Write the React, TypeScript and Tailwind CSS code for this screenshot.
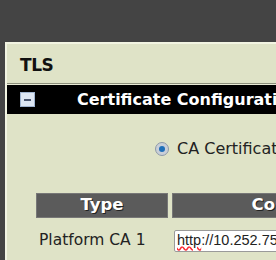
import React from 'react';

const App: React.FC = () => {
  return (
    <div className="w-[276px] h-[260px] overflow-hidden bg-[#444444] pl-[5px] pt-[42px]" style={{ fontFamily: '"DejaVu Sans", Verdana, sans-serif' }}>
      <div className="w-[460px] h-[240px] bg-[#dfe3c7] border-l-2 border-t-2 border-[#f2f4e2]">
        {/* Section title */}
        <div className="h-[39px] pl-[13px] pt-[9px] text-[17px] leading-[24px] font-bold text-[#111] tracking-tight">TLS</div>
        <div className="border-t border-[#8c8f7c] h-[2px] bg-[#e9ebd6]" />

        {/* Collapsible bar */}
        <div className="h-[29px] bg-black flex items-center">
          <div className="ml-[13px] w-[15px] h-[15px] bg-[#dde6f3] border border-[#9fb3cf] flex items-center justify-center">
            <div className="w-[7px] h-[2px] bg-[#4a5670]" />
          </div>
          <span className="ml-[42px] text-[16px] font-bold text-white whitespace-nowrap">Certificate Configuration</span>
        </div>

        {/* Radio */}
        <div className="mt-[23px] pl-[148px] flex items-center gap-[8px]">
          <div className="w-[14px] h-[14px] rounded-full bg-[#c9cfd8] border border-[#8d99a8] flex items-center justify-center">
            <div className="w-[6px] h-[6px] rounded-full bg-[#1f6fb8]" />
          </div>
          <span className="text-[16px] text-[#222] whitespace-nowrap">CA Certificate</span>
        </div>

        {/* Table */}
        <div className="mt-[32px] ml-[29px]">
          <div className="flex gap-[4px]">
            <div className="w-[132px] h-[25px] bg-[#5b5b5b] border border-[#777] flex items-center justify-center text-[16.5px] font-bold text-white" style={{ textShadow: '1px 1px 0 #222' }}>
              Type
            </div>
            <div className="w-[286px] h-[25px] bg-[#5b5b5b] border border-[#777] flex items-center justify-center text-[16.5px] font-bold text-white" style={{ textShadow: '1px 1px 0 #222' }}>
              Configuration
            </div>
          </div>
          <div className="flex items-center mt-[11px]">
            <div className="w-[138px] pl-[3px] text-[15.5px] text-[#222] whitespace-nowrap">Platform CA 1</div>
            <div className="w-[240px] h-[22px] bg-white border border-[#9a9a9a] rounded-[2px] flex items-center pl-[2px] text-[14.5px] text-[#222] whitespace-nowrap" style={{ fontFamily: '"Liberation Sans", Arial, sans-serif' }}>
              <span className="underline decoration-wavy decoration-red-500">http</span>://10.252.75.10
            </div>
          </div>
        </div>
      </div>
    </div>
  );
};

export default App;
